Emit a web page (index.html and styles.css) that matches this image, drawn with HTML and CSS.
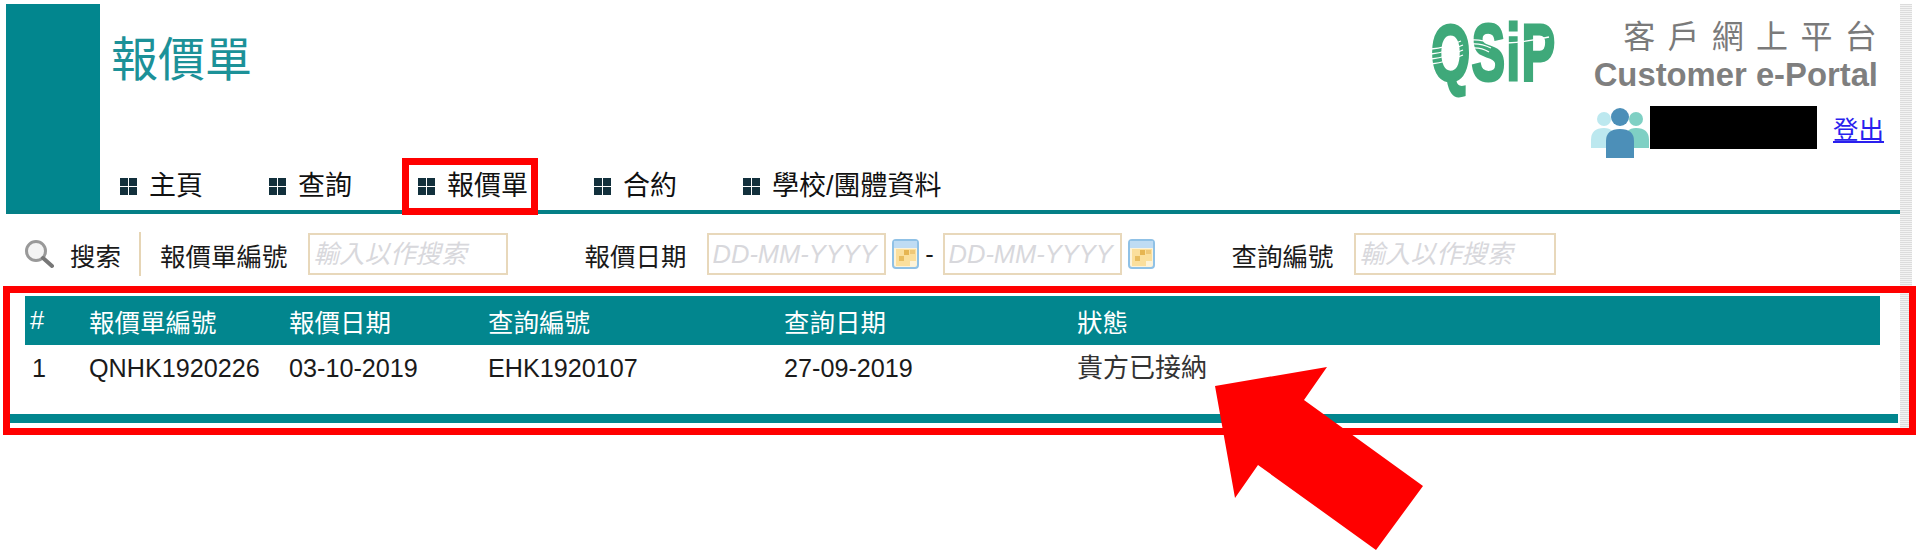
FILE: index.html
```html
<!DOCTYPE html>
<html lang="zh-Hant">
<head>
    <meta charset="UTF-8">
    <meta name="viewport" content="width=device-width, initial-scale=1.0">
    <title>報價單</title>
    <link rel="stylesheet" href="styles.css">
</head>
<body>
    <div class="frame">
        <div class="main">
            <header class="top">
                <div class="side-block"></div>
                <div class="top-left">
                    <h1>報價單</h1>
                    <nav class="menu">
                        <a href="#"><span class="menu-icon"><i></i><i></i><i></i><i></i></span>主頁</a>
                        <a href="#"><span class="menu-icon"><i></i><i></i><i></i><i></i></span>查詢</a>
                        <a href="#"><span class="menu-icon"><i></i><i></i><i></i><i></i></span>報價單</a>
                        <a href="#"><span class="menu-icon"><i></i><i></i><i></i><i></i></span>合約</a>
                        <a href="#"><span class="menu-icon"><i></i><i></i><i></i><i></i></span>學校/團體資料</a>
                    </nav>
                </div>
                <div class="logo">
                    <span class="logo-text">QSiP</span>
                    <svg class="logo-stripes" viewBox="0 0 126 70" width="126" height="70">
                        <path d="M0 27 Q14 26 30 19"/>
                        <path d="M0 32 Q16 30 32 23"/>
                        <path d="M0 37 Q16 35 32 28"/>
                        <path d="M0 42 Q16 40 32 33"/>
                        <path d="M40 18 Q50 17 62 22"/>
                        <path d="M40 22 Q50 21 60 26"/>
                        <path d="M40 26 Q50 25 58 30"/>
                        <path d="M76 21 Q95 20 118 15"/>
                    </svg>
                </div>
                <div class="portal">
                    <div class="portal-zh">客戶網上平台</div>
                    <div class="portal-en">Customer e-Portal</div>
                    <div class="user-row">
                        <svg class="user-icon" viewBox="0 0 58 52" width="58" height="52">
                            <circle cx="13" cy="12" r="7" fill="#bce8ef"/>
                            <path d="M0 41 V33 Q0 21 13 21 Q24 21 24 33 V41 Z" fill="#bce8ef"/>
                            <circle cx="45" cy="12" r="7" fill="#7fd0c4"/>
                            <path d="M34 41 V33 Q34 21 45 21 Q58 21 58 33 V41 Z" fill="#7fd0c4"/>
                            <circle cx="29" cy="10" r="9" fill="#4c8fb8"/>
                            <path d="M15 51 V34 Q15 22 29 22 Q43 22 43 34 V51 Z" fill="#4c8fb8"/>
                        </svg>
                        <div class="name-mask"></div>
                        <a class="logout" href="#">登出</a>
                    </div>
                </div>
            </header>

            <form class="search-row">
                <svg class="search-icon" viewBox="0 0 30 30" width="30" height="30">
                    <circle cx="12" cy="12" r="9.5" fill="#f4f4f4" stroke="#999" stroke-width="3"/>
                    <path d="M19 19 L28 27" stroke="#777" stroke-width="4" stroke-linecap="round"/>
                </svg>
                <span class="search-title">搜索</span>
                <span class="search-divider"></span>
                <label class="field first">報價單編號<input class="text-input" type="text" placeholder="輸入以作搜索"></label>
                <label class="field date-field">報價日期
                    <span class="date-range">
                        <input class="date-input" type="text" placeholder="DD-MM-YYYY">
                        <svg class="cal-icon" viewBox="0 0 27 30" width="27" height="30">
                            <rect x="1" y="1" width="25" height="28" rx="3" fill="#fdf3d8" stroke="#8fc1e6" stroke-width="2"/>
                            <rect x="2" y="2" width="23" height="7" fill="#bfdcf3"/>
                            <path d="M4 10 H24 V22 H18 V27 H4 Z" fill="#fbdf9c"/>
                            <rect x="12" y="11" width="5" height="5" fill="#e6b552"/>
                            <rect x="18" y="11" width="5" height="4" fill="#efc878"/>
                            <rect x="7" y="17" width="5" height="5" fill="#e9bd5f"/>
                        </svg>
                        <span class="dash">-</span>
                        <input class="date-input" type="text" placeholder="DD-MM-YYYY">
                        <svg class="cal-icon" viewBox="0 0 27 30" width="27" height="30">
                            <rect x="1" y="1" width="25" height="28" rx="3" fill="#fdf3d8" stroke="#8fc1e6" stroke-width="2"/>
                            <rect x="2" y="2" width="23" height="7" fill="#bfdcf3"/>
                            <path d="M4 10 H24 V22 H18 V27 H4 Z" fill="#fbdf9c"/>
                            <rect x="12" y="11" width="5" height="5" fill="#e6b552"/>
                            <rect x="18" y="11" width="5" height="4" fill="#efc878"/>
                            <rect x="7" y="17" width="5" height="5" fill="#e9bd5f"/>
                        </svg>
                    </span>
                </label>
                <label class="field enquiry-field">查詢編號<input class="text-input wide" type="text" placeholder="輸入以作搜索"></label>
            </form>

            <table class="quote-table">
                <colgroup>
                    <col class="col-no"><col class="col-quote"><col class="col-date"><col class="col-enq"><col class="col-enq-date"><col>
                </colgroup>
                <thead>
                    <tr>
                        <th>#</th>
                        <th>報價單編號</th>
                        <th>報價日期</th>
                        <th>查詢編號</th>
                        <th>查詢日期</th>
                        <th>狀態</th>
                    </tr>
                </thead>
                <tbody>
                    <tr>
                        <td>1</td>
                        <td>QNHK1920226</td>
                        <td>03-10-2019</td>
                        <td>EHK1920107</td>
                        <td>27-09-2019</td>
                        <td class="status">貴方已接納</td>
                    </tr>
                </tbody>
            </table>
            <div class="bottom-bar"></div>
        </div>
        <div class="scrollbar"></div>
    </div>

    <!-- annotations drawn over the screen -->
    <div class="mark mark-menu"></div>
    <div class="mark mark-table"></div>
    <svg class="arrow" viewBox="0 0 1917 556">
        <polygon points="1215,386 1327,367 1304,400 1423,486 1376,550 1258,465 1235,498" fill="#ff0000"/>
    </svg>
</body>
</html>
```

FILE: styles.css
```css
html, body {
    margin: 0;
    padding: 0;
    height: 556px;
    overflow: hidden;
    background: white;
}
body {
    position: relative;
    font-family: "Liberation Sans", "Noto Sans CJK TC", sans-serif;
    font-size: 25.5px;
    color: #1a1a1a;
}
.frame {
    display: flex;
    align-items: flex-start;
    padding: 4px 5px 0 6px;
}
.main {
    width: 1894px;
}
.top {
    display: flex;
    height: 206px;
    border-bottom: 4px solid #047f86;
}
.side-block {
    width: 94px;
    background-color: #02868e;
}
.top-left {
    flex: 1;
    display: flex;
    flex-direction: column;
    justify-content: space-between;
}
h1 {
    margin: 27px 0 0 11px;
    font-size: 47px;
    line-height: 58px;
    font-weight: normal;
    color: #1c9198;
}
.menu {
    display: flex;
    gap: 66px;
    padding: 0 0 7px 20px;
    font-size: 27px;
    line-height: 34px;
}
.menu a {
    display: flex;
    align-items: center;
    gap: 12px;
    color: #111;
    text-decoration: none;
}
.menu-icon {
    display: grid;
    grid-template-columns: 8px 8px;
    gap: 1px;
}
.menu-icon i {
    height: 8px;
    background-color: #12303c;
}
.logo {
    position: relative;
    width: 126px;
    height: 76px;
    margin: 11px 37px 0 0;
}
.logo-text {
    display: block;
    font-family: "Liberation Sans", sans-serif;
    font-weight: bold;
    font-size: 80px;
    line-height: 76px;
    letter-spacing: 2px;
    color: #3fa97a;
    -webkit-text-stroke: 3px #3fa97a;
    white-space: nowrap;
    transform: scaleX(0.63);
    transform-origin: left top;
}
.logo-stripes {
    position: absolute;
    left: 0;
    top: 7px;
}
.logo-stripes path {
    fill: none;
    stroke: white;
    stroke-width: 1.3px;
}
.portal {
    display: flex;
    flex-direction: column;
    align-items: flex-end;
    width: 306px;
    padding-top: 14px;
}
.portal-zh {
    margin-right: 11px;
    font-size: 32px;
    line-height: 38px;
    letter-spacing: 12.3px;
    color: #7a7a7a;
}
.portal-en {
    margin: 0 22px 0 0;
    font-size: 32.8px;
    line-height: 38px;
    font-weight: bold;
    white-space: nowrap;
    color: #7f7f7f;
}
.user-row {
    display: flex;
    align-items: flex-start;
    align-self: flex-start;
    margin: 12px 0 0 -3px;
}
.user-icon {
    margin-top: 1px;
}
.name-mask {
    width: 167px;
    height: 43px;
    margin-left: 1px;
    background-color: black;
}
.logout {
    margin: 9px 0 0 16px;
    line-height: 30px;
    color: #2a1fee;
}
.search-row {
    display: flex;
    align-items: center;
    height: 44px;
    padding: 18px 0 20px 18px;
}
.search-icon {
    margin-right: 16px;
}
.search-divider {
    width: 2px;
    height: 44px;
    margin-left: 18px;
    background-color: #e6d5b5;
}
.field {
    display: flex;
    align-items: center;
    gap: 20px;
}
.first {
    margin-left: 19px;
}
.date-field {
    margin-left: 77px;
}
.enquiry-field {
    margin-left: 77px;
    gap: 20px;
}
.date-range {
    display: flex;
    align-items: center;
}
input {
    box-sizing: border-box;
    height: 42px;
    border: 2px solid #e8d8bb;
    font-family: "Liberation Sans", "Noto Sans CJK TC", sans-serif;
    font-size: 25.5px;
    font-style: italic;
    outline: none;
}
input::placeholder {
    color: #d8d8dc;
}
.text-input {
    width: 200px;
    padding: 0 4px;
}
.wide {
    width: 202px;
}
.date-input {
    width: 179px;
    padding: 0 4px;
}
.cal-icon {
    margin-left: 6px;
}
.dash {
    width: 26px;
    text-align: center;
    margin-left: -2px;
}
.quote-table {
    width: 1855px;
    margin-left: 19px;
    border-collapse: collapse;
    table-layout: fixed;
}
.col-no { width: 64px; }
.col-quote { width: 200px; }
.col-date { width: 199px; }
.col-enq { width: 296px; }
.col-enq-date { width: 293px; }
th {
    height: 49px;
    padding: 0;
    text-align: left;
    font-weight: normal;
    color: white;
    background-color: #02868e;
}
td {
    height: 69px;
    padding: 3px 0 0;
    vertical-align: top;
    font-size: 25.2px;
    line-height: 40px;
    box-sizing: border-box;
}
th:first-child {
    padding-left: 5px;
}
td:first-child {
    padding-left: 7px;
}
.status {
    font-size: 26px;
    color: #333;
}
.bottom-bar {
    height: 9px;
    margin: 0 2px 0 4px;
    background-color: #02868e;
}
.scrollbar {
    width: 12px;
    height: 424px;
    background: repeating-linear-gradient(#dcdcdc 0 1px, #f3f3f3 1px 2px);
}
.mark {
    position: absolute;
    box-sizing: border-box;
    border: 7px solid #ff0000;
}
.mark-menu {
    left: 402px;
    top: 158px;
    width: 136px;
    height: 57px;
}
.mark-table {
    left: 3px;
    top: 286px;
    width: 1913px;
    height: 149px;
}
.arrow {
    position: absolute;
    left: 0;
    top: 0;
    width: 1917px;
    height: 556px;
}
```
